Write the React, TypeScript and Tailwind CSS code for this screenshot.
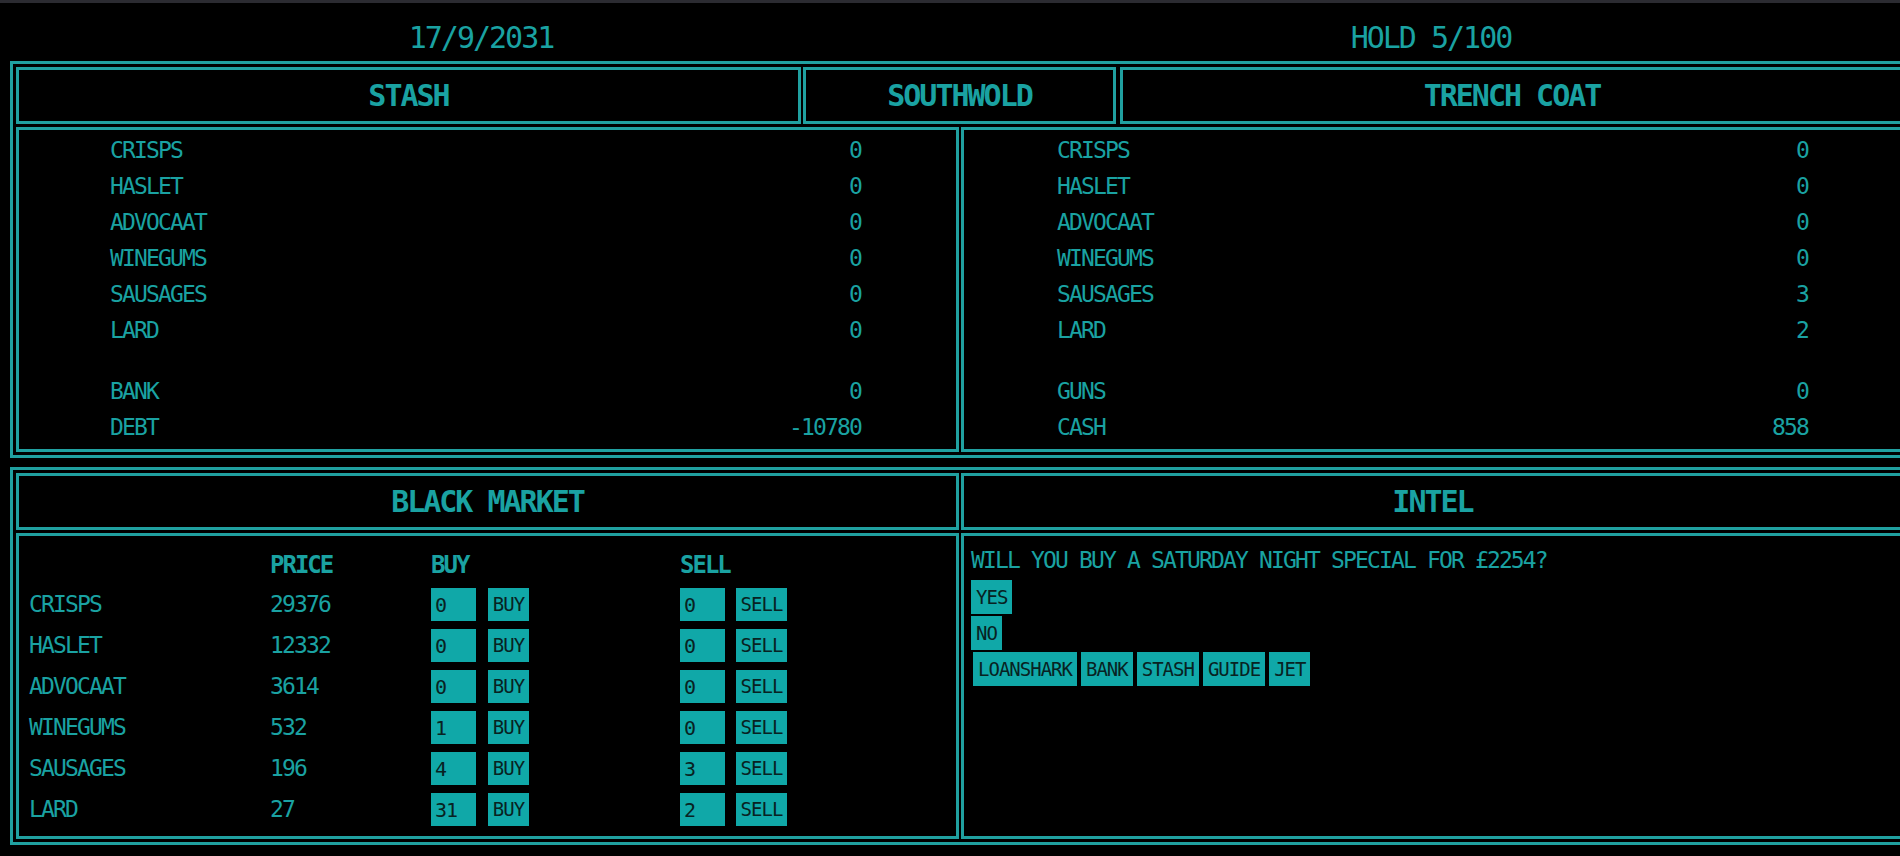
import React from "react";

const items = ["CRISPS", "HASLET", "ADVOCAAT", "WINEGUMS", "SAUSAGES", "LARD"];
const stash = [0, 0, 0, 0, 0, 0];
const coat = [0, 0, 0, 0, 3, 2];
const prices = [29376, 12332, 3614, 532, 196, 27];
const buyQ = [0, 0, 0, 1, 4, 31];
const sellQ = [0, 0, 0, 0, 3, 2];

function HeadBox({ children, className = "" }: { children: React.ReactNode; className?: string }) {
  return (
    <div
      className={
        "h-[57px] border-[3px] border-[#20a0a0] flex items-center justify-center font-bold text-[30px] leading-[30px] tracking-[-2px] " +
        className
      }
    >
      {children}
    </div>
  );
}

function Row({ label, value }: { label: string; value: number | string }) {
  return (
    <div className="h-[36px] flex items-center justify-between text-[23px] leading-[23px] tracking-[-1.85px]">
      <span>{label}</span>
      <span>{value}</span>
    </div>
  );
}

function Btn({ children }: { children: React.ReactNode }) {
  return (
    <div className="h-[34px] px-[5px] bg-[#10a8a8] text-[#082222] flex items-center text-[19px] leading-[19px] tracking-[-1px]">
      {children}
    </div>
  );
}

export default function App() {
  return (
    <div className="w-[1900px] h-[856px] overflow-hidden bg-black text-[#1aa2a2] font-['DejaVu_Sans_Mono',monospace]">
      <div className="h-[3px] bg-[#2b2b31]" />
      <div className="ml-[10px] w-[1900px] flex justify-around pt-[20px] pb-[8px] text-[30px] leading-[30px] tracking-[-2px]">
        <div>17/9/2031</div>
        <div>HOLD 5/100</div>
      </div>

      {/* Top frame */}
      <div className="ml-[10px] w-[1900px] border-[3px] border-[#20a0a0] p-[3px] flex flex-col gap-[3px]">
        <div className="flex">
          <HeadBox className="w-[785px]">STASH</HeadBox>
          <HeadBox className="ml-[2px] w-[313px]">SOUTHWOLD</HeadBox>
          <HeadBox className="ml-[4px] flex-1">TRENCH COAT</HeadBox>
        </div>
        <div className="grid grid-cols-2 gap-[2px]">
          <div className="h-[325px] border-[3px] border-[#20a0a0] pt-[2px] pl-[91px] pr-[95px]">
            {items.map((it, i) => (
              <Row key={it} label={it} value={stash[i]} />
            ))}
            <div className="h-[25px]" />
            <Row label="BANK" value={0} />
            <Row label="DEBT" value={-10780} />
          </div>
          <div className="h-[325px] border-[3px] border-[#20a0a0] pt-[2px] px-[93px]">
            {items.map((it, i) => (
              <Row key={it} label={it} value={coat[i]} />
            ))}
            <div className="h-[25px]" />
            <Row label="GUNS" value={0} />
            <Row label="CASH" value={858} />
          </div>
        </div>
      </div>

      {/* Bottom frame */}
      <div className="mt-[9px] ml-[10px] w-[1900px] border-[3px] border-[#20a0a0] p-[3px] flex flex-col gap-[3px]">
        <div className="grid grid-cols-2 gap-[2px]">
          <HeadBox>BLACK MARKET</HeadBox>
          <HeadBox>INTEL</HeadBox>
        </div>
        <div className="grid grid-cols-2 gap-[2px]">
          <div className="h-[306px] border-[3px] border-[#20a0a0] pt-[10px] pl-[10px]">
            <div className="grid grid-cols-[241px_161px_249px_1fr] h-[38px] items-center font-bold text-[24px] leading-[24px] tracking-[-2px]">
              <div />
              <div>PRICE</div>
              <div>BUY</div>
              <div>SELL</div>
            </div>
            {items.map((it, i) => (
              <div
                key={it}
                className="grid grid-cols-[241px_161px_249px_1fr] h-[41px] items-center text-[23px] leading-[23px] tracking-[-1.85px]"
              >
                <div>{it}</div>
                <div>{prices[i]}</div>
                <div className="flex gap-[12px]">
                  <div className="w-[45px] h-[33px] bg-[#10a8a8] text-[#082222] pl-[4px] flex items-center text-[20px] leading-[20px] tracking-[-1px]">
                    {buyQ[i]}
                  </div>
                  <div className="w-[41px] h-[33px] bg-[#10a8a8] text-[#082222] flex items-center justify-center text-[19px] leading-[19px] tracking-[-1px]">
                    BUY
                  </div>
                </div>
                <div className="flex gap-[11px]">
                  <div className="w-[45px] h-[33px] bg-[#10a8a8] text-[#082222] pl-[4px] flex items-center text-[20px] leading-[20px] tracking-[-1px]">
                    {sellQ[i]}
                  </div>
                  <div className="w-[51px] h-[33px] bg-[#10a8a8] text-[#082222] flex items-center justify-center text-[19px] leading-[19px] tracking-[-1px]">
                    SELL
                  </div>
                </div>
              </div>
            ))}
          </div>
          <div className="h-[306px] border-[3px] border-[#20a0a0] pt-[12px] pl-[7px]">
            <div className="h-[24px] flex items-center text-[23px] leading-[23px] tracking-[-1.85px]">
              WILL YOU BUY A SATURDAY NIGHT SPECIAL FOR £2254?
            </div>
            <div className="mt-[8px] flex">
              <Btn>YES</Btn>
            </div>
            <div className="mt-[2px] flex">
              <Btn>NO</Btn>
            </div>
            <div className="mt-[2px] ml-[2px] flex gap-[4px]">
              <Btn>LOANSHARK</Btn>
              <Btn>BANK</Btn>
              <Btn>STASH</Btn>
              <Btn>GUIDE</Btn>
              <Btn>JET</Btn>
            </div>
          </div>
        </div>
      </div>
    </div>
  );
}
